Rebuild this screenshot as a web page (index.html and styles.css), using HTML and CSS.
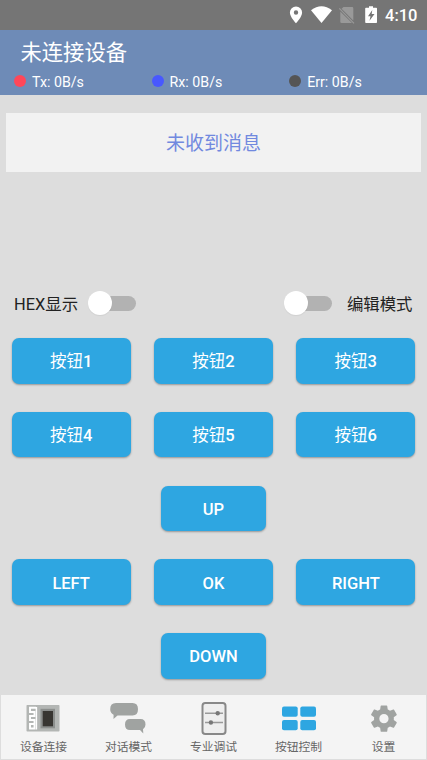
FILE: index.html
```
<!DOCTYPE html>
<html lang="zh-CN">
<head>
<meta charset="utf-8">
<title>按钮控制</title>
<link rel="stylesheet" href="styles.css">
</head>
<body>
<div class="status">
  <svg class="status-icons" width="92" height="30" viewBox="0 0 92 30">
    <path fill="#fff" fill-rule="evenodd" d="M11 6.400a6.100 6.100 0 0 0-6.100 6.100C4.900 17 11 23.300 11 23.300S17.100 17 17.100 12.500A6.100 6.100 0 0 0 11 6.400ZM11 10.300a2.200 2.200 0 1 1 0 4.400a2.200 2.200 0 0 1 0-4.400Z"/>
    <path fill="#fff" d="M26 10.200Q36.500 2.400 47 10.200L36.500 23Z"/>
    <path fill="#999" d="M58.500 7H67.200Q68.300 7 68.300 8.200V20.600L56.600 8.800ZM55.300 11.500L67 23H56.500Q55.300 23 55.300 21.800Z"/>
    <path stroke="#999" stroke-width="1.200" d="M54.300 8.300L69 23.300"/>
    <path fill="#fff" fill-rule="evenodd" d="M84 6.200h4v1.600h3.200q.8 0 .8.800v13.600q0 .8-.8.800H81q-.8 0-.8-.8V8.600q0-.8.800-.8h3ZM87.300 10L83 16.200h2.500l-1 4.600L89.500 14h-2.800Z"/>
  </svg>
  <span class="clock">4:10</span>
</div>
<header class="header">
  <h1 class="title">未连接设备</h1>
  <div class="stats">
    <div class="stat"><i class="dot red"></i>Tx: 0B/s</div>
    <div class="stat"><i class="dot blue"></i>Rx: 0B/s</div>
    <div class="stat"><i class="dot gray"></i>Err: 0B/s</div>
  </div>
</header>
<main class="main">
  <div class="message">未收到消息</div>
  <div class="switches">
    <div class="option"><span>HEX显示</span><span class="switch"><i class="thumb"></i></span></div>
    <div class="option"><span class="switch"><i class="thumb"></i></span><span>编辑模式</span></div>
  </div>
  <div class="grid">
    <button class="btn"><span class="zh">按钮</span>1</button><button class="btn"><span class="zh">按钮</span>2</button><button class="btn"><span class="zh">按钮</span>3</button>
    <button class="btn"><span class="zh">按钮</span>4</button><button class="btn"><span class="zh">按钮</span>5</button><button class="btn"><span class="zh">按钮</span>6</button>
    <button class="btn narrow">UP</button>
    <button class="btn">LEFT</button><button class="btn">OK</button><button class="btn">RIGHT</button>
    <button class="btn narrow">DOWN</button>
  </div>
</main>
<nav class="nav">
  <div class="tab">
    <svg width="38" height="36" viewBox="0 0 38 36">
      <rect x="1.500" y="5" width="33" height="26.500" rx=".8" fill="#b3b6b4"/>
      <path fill="none" stroke="#fff" stroke-width="1.900" d="M11 7.800H5V12H9.500V16H5V20H9.500V24H5V28.500H9.500V24"/>
      <path stroke="#fff" stroke-width="1.500" d="M11.400 7V29.500"/>
      <rect x="15.500" y="8.800" width="14.500" height="19.500" fill="#8c8f8d"/>
      <rect x="17.700" y="11" width="10.300" height="15.300" fill="#383632"/>
    </svg>
    <span>设备连接</span>
  </div>
  <div class="tab">
    <svg width="38" height="36" viewBox="1 0 38 36">
      <path fill="#a0a3a1" d="M7 3H23.500Q29 3 29 9.200T23.500 15.500H8.500L4.500 19L4.600 14.700Q1.200 12.800 1.200 9.200Q1.200 3 7 3ZM21 19H31.500Q36.500 19 36.500 24.500Q36.500 28 34 29.300L34.300 33.500L31 30H21Q16 30 16 24.500T21 19Z"/>
    </svg>
    <span>对话模式</span>
  </div>
  <div class="tab">
    <svg width="38" height="36" viewBox="0 0 38 36">
      <rect x="7.500" y="3" width="23" height="31" rx="2.800" fill="#eee" stroke="#888" stroke-width="2"/>
      <path stroke="#999" stroke-width="1.500" d="M10 13.200H28M10 22.500H28"/>
      <circle cx="22.700" cy="13.200" r="2.200" fill="#777"/>
      <circle cx="15.900" cy="22.500" r="2.200" fill="#777"/>
    </svg>
    <span>专业调试</span>
  </div>
  <div class="tab">
    <svg width="38" height="36" viewBox="0 0 38 36" fill="#2ea6e1">
      <rect x="2" y="6.500" width="15.700" height="10.300" rx="2"/>
      <rect x="20.300" y="6.500" width="15.700" height="10.300" rx="2"/>
      <rect x="2" y="20" width="15.700" height="10.300" rx="2"/>
      <rect x="20.300" y="20" width="15.700" height="10.300" rx="2"/>
    </svg>
    <span>按钮控制</span>
  </div>
  <div class="tab">
    <svg width="38" height="36" viewBox="0 0 38 36">
      <path transform="translate(3.100 2.800) scale(1.320)" fill="#a0a3a1" fill-rule="evenodd" d="M19.430 12.980c.04-.32.070-.64.070-.98s-.03-.66-.07-.98l2.110-1.650c.19-.15.24-.42.120-.64l-2-3.460c-.12-.22-.39-.3-.61-.22l-2.490 1c-.52-.4-1.080-.73-1.690-.98l-.38-2.650A.488.488 0 0 0 14 2h-4c-.25 0-.46.180-.49.420l-.38 2.650c-.61.250-1.170.590-1.690.980l-2.490-1c-.23-.09-.49 0-.61.220l-2 3.460c-.13.220-.07.490.120.640l2.110 1.650c-.04.320-.07.650-.07.980s.03.660.070.980l-2.110 1.650c-.19.150-.24.420-.12.640l2 3.460c.12.220.390.300.610.220l2.490-1c.52.400 1.080.730 1.690.980l.38 2.650c.03.240.240.420.490.420h4c.25 0 .46-.18.490-.42l.38-2.650c.61-.25 1.170-.59 1.690-.98l2.490 1c.23.090.490 0 .61-.22l2-3.460c.12-.22.070-.49-.12-.64zM12 15.500a3.500 3.500 0 1 1 0-7a3.500 3.500 0 0 1 0 7z"/>
    </svg>
    <span>设置</span>
  </div>
</nav>
</body>
</html>
```
FILE: styles.css
```
* { box-sizing: border-box; }
body {
  margin: 0;
  width: 427px;
  height: 760px;
  display: flex;
  flex-direction: column;
  background: #ddd;
  font-family: Roboto, "Noto Sans CJK SC", sans-serif;
  overflow: hidden;
}
.status {
  height: 30px;
  flex: none;
  background: #757575;
  display: flex;
  align-items: center;
  justify-content: flex-end;
  padding-right: 9.500px;
}
.status-icons { flex: none; width: 92px; }
.clock {
  width: 33px;
  margin-left: 7.500px;
  text-align: right;
  color: #fff;
  font-size: 16.500px;
  font-weight: 500;
  line-height: 30px;
  padding-top: 1px;
}
.header {
  height: 65px;
  flex: none;
  background: #6e8bb7;
  color: #fff;
}
.title {
  margin: 0;
  padding: 7px 0 0 20.500px;
  font-size: 21.300px;
  font-weight: 400;
  line-height: 31px;
  height: 43px;
}
.stats { display: flex; padding-left: 14px; }
.stat {
  width: 137.600px;
  display: flex;
  align-items: center;
  font-size: 14.200px;
  line-height: 19px;
}
.dot { width: 12px; height: 12px; border-radius: 50%; margin: -3px 6px 0 0; }
.red { background: #ff4759; }
.blue { background: #4858ff; }
.gray { background: #555; }
.main { flex: 1; padding-top: 18px; }
.message {
  height: 59px;
  margin: 0 6px;
  background: #f2f2f2;
  color: #7189df;
  font-size: 19px;
  line-height: 61px;
  text-align: center;
}
.switches {
  margin-top: 116px;
  height: 30px;
  padding: 0 14.500px 0 14px;
  display: flex;
  justify-content: space-between;
  color: #222;
  font-size: 16.400px;
}
.option { display: flex; align-items: center; gap: 10px; }
.option:last-child { gap: 15px; }
.switch {
  position: relative;
  width: 48px;
  height: 24px;
  display: flex;
}
.switch::before {
  content: "";
  position: absolute;
  left: 8px;
  top: 4.500px;
  width: 40px;
  height: 15px;
  border-radius: 8px;
  background: #b2b2b2;
}
.thumb { position: relative; width: 24px; height: 24px; border-radius: 50%; background: #fff; box-shadow: 0 1px 1px rgba(0,0,0,.06); }
.grid {
  display: grid;
  grid-template-columns: repeat(3, 1fr);
  grid-auto-rows: 45.500px;
  row-gap: 28.250px;
  justify-items: center;
  margin-top: 20.200px;
}
.btn {
  width: 119px;
  border: 0;
  padding: 2px 0 0;
  border-radius: 7px;
  background: #2ea6e1;
  color: #fff;
  font: 500 16.500px/43px Roboto, "Noto Sans CJK SC", sans-serif;
  box-shadow: 0 1px 2px rgba(0,0,0,.32);
}
.zh { font-weight: 400; line-height: 1; }
.narrow { grid-column: 2; width: 105px; }
.narrow + .btn { grid-column: 1; }
.nav {
  height: 64px;
  flex: none;
  margin: 0 1px 1px;
  background: #f4f4f4;
  display: grid;
  grid-template-columns: repeat(5, 1fr);
}
.tab {
  display: flex;
  flex-direction: column;
  align-items: center;
  padding-top: 5px;
  color: #666;
  font-size: 11.800px;
  line-height: 22px;
}
.tab svg { flex: none; }
```
